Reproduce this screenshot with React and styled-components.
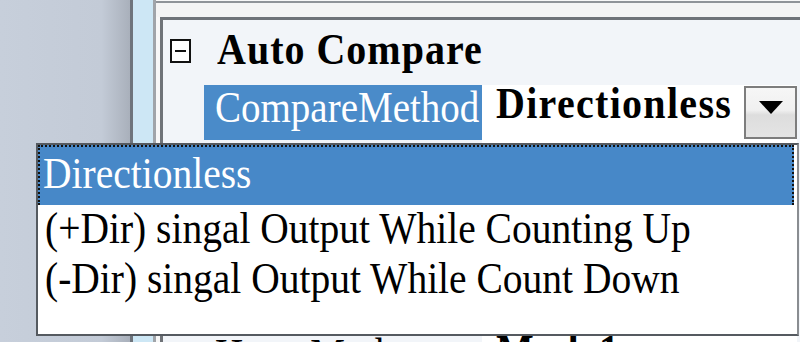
import React from "react";
import styled, { createGlobalStyle } from "styled-components";

const serif = `Liberation Serif, Tinos, serif`;

const GlobalStyle = createGlobalStyle`
  html, body {
    margin: 0;
    padding: 0;
    width: 800px;
    height: 342px;
    overflow: hidden;
    background: #f2f5f9;
  }
  body {
    font-family: ${serif};
  }
`;

// rows under the open list are hidden; only the last one peeks out at the bottom
const rows = [
  { name: "", value: "", height: 64 },
  { name: "", value: "", height: 64 },
  { name: "", value: "", height: 64 },
  { name: "HomeMode", value: "Mode1", height: 55 },
];

const options = [
  "Directionless",
  "(+Dir) singal Output While Counting Up",
  "(-Dir) singal Output While Count Down",
];

function App() {
  return (
    <Screen>
      <GlobalStyle />
      <LeftPane />
      <Splitter />
      <Main>
        <TopBar />
        <Grid>
          <CategoryRow>
            <Toggle width="21" height="24" viewBox="0 0 21 24">
              <rect x="1" y="1" width="19" height="22" fill="#fff" stroke="#111" strokeWidth="2" />
              <rect x="5" y="11" width="11" height="2" fill="#111" />
            </Toggle>
            <CategoryTitle>
              <Tall>Auto Compare</Tall>
            </CategoryTitle>
          </CategoryRow>

          <PropertyRow>
            <NameCell $selected>
              <Tall>CompareMethod</Tall>
            </NameCell>
            <ValueCell>
              <Tall>Directionless</Tall>
              <DropButton>
                <svg width="24" height="13" viewBox="0 0 24 13">
                  <polygon points="0,0 24,0 12,13" fill="#000" />
                </svg>
              </DropButton>
            </ValueCell>
          </PropertyRow>

          {rows.map((r, i) => (
            <PropertyRow key={i} $height={r.height}>
              <NameCell>
                <Tall>{r.name}</Tall>
              </NameCell>
              <ValueCell>
                <Tall>{r.value}</Tall>
              </ValueCell>
            </PropertyRow>
          ))}
        </Grid>
      </Main>

      <DropList>
        {options.map((o, i) => (
          <Option key={o} $selected={i === 0}>
            <Tall>{o}</Tall>
          </Option>
        ))}
      </DropList>
    </Screen>
  );
}

const Screen = styled.div`
  position: relative;
  display: flex;
  width: 800px;
  height: 342px;
  overflow: hidden;
  font-family: ${serif};
`;

const LeftPane = styled.div`
  flex: none;
  width: 130px;
  background: linear-gradient(90deg, #c7cfdb 0%, #c3cbd7 78%, #a9b0bb 100%);
  border-right: 3px solid #6e747c;
`;

const Splitter = styled.div`
  flex: none;
  width: 20px;
  background: #cde7f5;
  border-right: 3px solid #a0a4a9;
`;

const Main = styled.div`
  flex: 1;
  display: flex;
  flex-direction: column;
  background: #f7f7f7;
  min-width: 0;
`;

const TopBar = styled.div`
  flex: none;
  height: 14px;
  margin-top: 1px;
  border-top: 2px solid #8f9398;
  background: #f4f4f4;
`;

const Grid = styled.div`
  flex: 1;
  margin-left: 4px;
  border-left: 3px solid #6f7378;
  border-top: 3px solid #6f7378;
  background: #f2f5f9;
  display: flex;
  flex-direction: column;
`;

const Tall = styled.span`
  display: inline-block;
  line-height: 1;
  transform: scaleY(1.12);
  transform-origin: 0 84%;
  white-space: pre;
`;

const CategoryRow = styled.div`
  flex: none;
  height: 65px;
  display: flex;
  align-items: flex-start;
  padding-left: 7px;
`;

const Toggle = styled.svg`
  margin-top: 19px;
  flex: none;
`;

const CategoryTitle = styled.div`
  margin-left: 26px;
  font-size: 40px;
  font-weight: bold;
  letter-spacing: 1px;
  line-height: 61px;
  color: #000;
`;

const PropertyRow = styled.div`
  flex: none;
  height: ${(p) => p.$height || 55}px;
  display: flex;
  padding-left: 41px;
`;

const NameCell = styled.div`
  flex: none;
  width: 267px;
  padding-left: 11px;
  background: ${(p) => (p.$selected ? "#4a8bc9" : "transparent")};
  color: ${(p) => (p.$selected ? "#fff" : "#000")};
  font-size: 39px;
  line-height: 48px;
`;

const ValueCell = styled.div`
  flex: 1;
  display: flex;
  justify-content: space-between;
  align-items: flex-start;
  margin-right: 3px;
  padding-left: 14px;
  background: #fff;
  font-size: 40px;
  font-weight: bold;
  letter-spacing: 1.3px;
  line-height: 48px;
  color: #000;
`;

const DropButton = styled.div`
  flex: none;
  box-sizing: border-box;
  width: 53px;
  height: 53px;
  margin-top: 1px;
  border: 2px solid #7d7d7d;
  background: linear-gradient(#f6f6f6 0%, #f0f0f0 45%, #dddddd 55%, #e4e4e4 100%);
  display: flex;
  justify-content: center;
  align-items: flex-start;
  padding-top: 13px;
`;

const DropList = styled.div`
  position: absolute;
  left: 36px;
  top: 143px;
  width: 763px;
  height: 193px;
  box-sizing: border-box;
  border: 2px solid #555a60;
  border-right-color: #8a8d91;
  background: #fff;
  display: flex;
  flex-direction: column;
`;

const Option = styled.div`
  flex: none;
  box-sizing: border-box;
  height: ${(p) => (p.$selected ? 60 : 50)}px;
  margin-right: ${(p) => (p.$selected ? 3 : 0)}px;
  padding-left: ${(p) => (p.$selected ? 3 : 7)}px;
  font-size: 39.5px;
  line-height: ${(p) => (p.$selected ? 56 : 50)}px;
  color: ${(p) => (p.$selected ? "#fff" : "#000")};
  background: ${(p) => (p.$selected ? "#4788c8" : "transparent")};
  border: ${(p) => (p.$selected ? "2px dotted #111" : "none")};
  border-bottom: none;
  white-space: nowrap;
`;

export default App;
